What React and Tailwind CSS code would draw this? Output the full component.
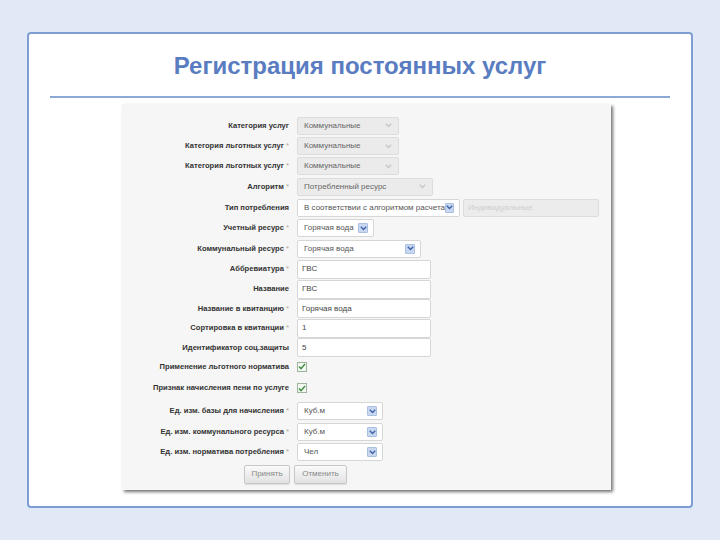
import React from "react";

const Chevron = ({ active }) => (
  <span
    className={`flex items-center justify-center w-[10px] h-[10px] rounded-[1px] ${
      active ? "bg-[#c9d8f0] border border-[#a9bfe3]" : "bg-transparent"
    }`}
  >
    <svg width="7" height="5" viewBox="0 0 7 5">
      <path
        d="M0.8 0.8 L3.5 3.6 L6.2 0.8"
        fill="none"
        stroke={active ? "#3d62a8" : "#c8c8c8"}
        strokeWidth="1.4"
      />
    </svg>
  </span>
);

const Select = ({ value, width, disabled }) => (
  <div
    className={`flex items-center justify-between h-[18px] pl-[6px] pr-[5px] rounded-[2px] border ${width} ${
      disabled ? "bg-[#ebebeb] border-[#dcdcdc] text-[#666]" : "bg-white border-[#d6d6d6] text-[#555]"
    }`}
  >
    <span className="whitespace-nowrap">{value}</span>
    <Chevron active={!disabled} />
  </div>
);

const Input = ({ value }) => (
  <div className="flex items-center h-[19px] w-[134px] pl-[4px] bg-white border border-[#d6d6d6] rounded-[2px] text-[#444]">
    {value}
  </div>
);

const Check = () => (
  <span className="flex items-center justify-center w-[10px] h-[10px] border border-[#9db39d] bg-[#f3f8f3]">
    <svg width="8" height="7" viewBox="0 0 8 7">
      <path d="M1 3.6 L3 5.6 L7 1" fill="none" stroke="#3f8a3f" strokeWidth="1.4" />
    </svg>
  </span>
);

const rows = [
  { label: "Категория услуг", h: "h-[21px]", field: <Select value="Коммунальные" width="w-[102px]" disabled /> },
  { label: "Категория льготных услуг", req: true, h: "h-[20px]", field: <Select value="Коммунальные" width="w-[102px]" disabled /> },
  { label: "Категория льготных услуг", req: true, h: "h-[20px]", field: <Select value="Коммунальные" width="w-[102px]" disabled /> },
  { label: "Алгоритм", req: true, h: "h-[21px]", field: <Select value="Потребленный ресурс" width="w-[136px]" disabled /> },
  {
    label: "Тип потребления",
    h: "h-[21px]",
    field: (
      <div className="flex items-center gap-[3px]">
        <Select value="В соответствии с алгоритмом расчета" width="w-[163px]" />
        <div className="flex items-center h-[18px] w-[136px] pl-[4px] bg-[#ececec] border border-[#dcdcdc] rounded-[2px] text-[#cfcfcf]">
          Индивидуальные
        </div>
      </div>
    ),
  },
  { label: "Учетный ресурс", req: true, h: "h-[20px]", field: <Select value="Горячая вода" width="w-[77px]" /> },
  { label: "Коммунальный ресурс", req: true, h: "h-[21px]", field: <Select value="Горячая вода" width="w-[124px]" /> },
  { label: "Аббревиатура", req: true, h: "h-[20px]", field: <Input value="ГВС" /> },
  { label: "Название", h: "h-[20px]", field: <Input value="ГВС" /> },
  { label: "Название в квитанцию", req: true, h: "h-[19px]", field: <Input value="Горячая вода" /> },
  { label: "Сортировка в квитанции", req: true, h: "h-[20px]", field: <Input value="1" /> },
  { label: "Идентификатор соц.защиты", h: "h-[19px]", field: <Input value="5" /> },
  { label: "Применение льготного норматива", h: "h-[19px]", field: <Check /> },
  { label: "Признак начисления пени по услуге", h: "h-[24px]", field: <Check /> },
  { label: "Ед. изм. базы для начисления", req: true, h: "h-[22px]", field: <Select value="Куб.м" width="w-[86px]" /> },
  { label: "Ед. изм. коммунального ресурса", req: true, h: "h-[20px]", field: <Select value="Куб.м" width="w-[86px]" /> },
  { label: "Ед. изм. норматива потребления", req: true, h: "h-[20px]", field: <Select value="Чел" width="w-[86px]" /> },
];

const Button = ({ children, width }) => (
  <button
    className={`h-[19px] ${width} rounded-[2px] border border-[#c8c8c8] bg-gradient-to-b from-[#fafafa] to-[#e2e2e2] text-[#8a8a8a] text-[8px] shadow-[0_1px_1px_rgba(0,0,0,0.1)]`}
  >
    {children}
  </button>
);

export default function App() {
  return (
    <div className="w-[720px] h-[540px] bg-[#e1e9f6] pt-[32px] pl-[27px] font-['Liberation_Sans',Arial,sans-serif]">
      <div className="w-[666px] h-[476px] bg-white border-2 border-[#7e9dd2] rounded-[4px] flex flex-col items-center">
        <h1 className="mt-[16px] text-[24px] leading-[32px] font-bold text-[#5a7cc1]">
          Регистрация постоянных услуг
        </h1>
        <div className="mt-[14px] w-[620px] h-[2px] bg-[#8ea8d7]" />
        <div className="mt-[6px] self-start ml-[93px] w-[489px] bg-[#f6f6f6] shadow-[2px_2px_3px_rgba(0,0,0,0.55)] pt-[11px] pb-[5px] text-[8px]">
          {rows.map((row, i) => (
            <div key={i} className={`flex items-center ${row.h}`}>
              <div className="w-[168px] pr-[1px] text-right text-[7.6px] font-bold text-[#333] whitespace-nowrap">
                {row.label}
                {row.req && <span className="font-normal text-[#aaa]"> *</span>}
              </div>
              <div className="ml-[7px]">{row.field}</div>
            </div>
          ))}
          <div className="flex items-center h-[22px] mt-[1px] pl-[122px] gap-[4px]">
            <Button width="w-[46px]">Принять</Button>
            <Button width="w-[53px]">Отменить</Button>
          </div>
        </div>
      </div>
    </div>
  );
}
